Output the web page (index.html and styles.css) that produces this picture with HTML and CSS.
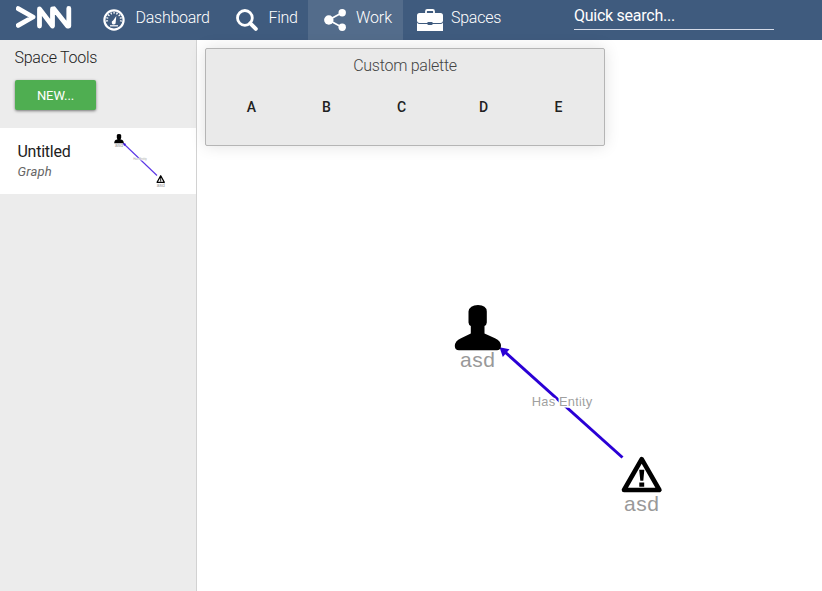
FILE: index.html
```html
<!DOCTYPE html>
<html lang="en">
<head>
<meta charset="utf-8">
<title>Work</title>
<link rel="stylesheet" href="styles.css">
</head>
<body>
<header class="topbar">
  <a class="logo" aria-label="Home">
    <svg width="56" height="24" viewBox="0 0 56 24"><path d="M2.200 2.600L17 11L2.200 19.400M23.500 20V2.900L36.500 20V2.900M38 2.900L51.500 20M52.800 2.500V20" fill="none" stroke="#fff" stroke-width="4.800" stroke-linejoin="round" stroke-linecap="round"/></svg>
  </a>
  <nav class="nav">
    <a class="nav-item dashboard">
      <svg width="22" height="22" viewBox="0 0 22 22"><circle cx="11" cy="11" r="9.6" fill="none" stroke="#fff" stroke-width="2.2"/><path d="M4.2 12.5A7 7 0 1 1 17.8 12.5" fill="none" stroke="#fff" stroke-width="2" stroke-dasharray="1.3 1.7"/><path d="M13.3 7L12.7 13.2A2 2 0 1 1 10.1 11.6Z" fill="#fff"/><path d="M7 16.8H15" stroke="#fff" stroke-width="1.2"/></svg>
      <span>Dashboard</span>
    </a>
    <a class="nav-item find">
      <svg width="22" height="22" viewBox="0 0 22 22"><circle cx="8.9" cy="8.9" r="7.4" fill="none" stroke="#fff" stroke-width="2.8"/><path d="M14.3 14.3L19.8 19.8" stroke="#fff" stroke-width="4" stroke-linecap="round"/></svg>
      <span>Find</span>
    </a>
    <a class="nav-item work active">
      <svg width="22" height="22" viewBox="0 0 22 22"><path d="M18 3.7L4.6 11L18 18.3" fill="none" stroke="#fff" stroke-width="1.7"/><circle cx="4.8" cy="11" r="4.7" fill="#fff"/><circle cx="18.2" cy="3.7" r="3.7" fill="#fff"/><circle cx="18.2" cy="18.3" r="3.7" fill="#fff"/></svg>
      <span>Work</span>
    </a>
    <a class="nav-item spaces">
      <svg width="26" height="22" viewBox="0 0 26 22"><path d="M9 4V2.3Q9 1 10.3 1H15.7Q17 1 17 2.3V4" fill="none" stroke="#fff" stroke-width="1.8"/><path d="M2.500 4H23.500Q26 4 26 6.500V12Q25.700 14 23.500 14H15.500V13H10.500V14H2.500Q.3 14 0 12V6.500Q0 4 2.500 4Z" fill="#fff"/><path d="M0 13.800Q1 15 2.700 15H10.300Q10.500 16 11.500 16H14.500Q15.500 16 15.700 15H23.300Q25 15 26 13.800V22H0Z" fill="#fff"/></svg>
      <span>Spaces</span>
    </a>
  </nav>
  <div class="search">Quick search...</div>
</header>
<div class="workspace">
  <aside class="sidebar">
    <h2 class="side-title">Space Tools</h2>
    <button class="new-button">NEW...</button>
    <section class="card">
      <div class="card-text">
        <div class="card-name">Untitled</div>
        <div class="card-type">Graph</div>
      </div>
      <svg class="thumb" width="56" height="56" viewBox="0 0 56 56">
        <path d="M12 11L45 42.500" stroke="#5a35e6" stroke-width="1.1"/>
        <path d="M10.5 9.5L14.2 11L12.2 13Z" fill="#3814d8"/>
        <path d="M4.800 2.2Q5 1 7 1T9.200 2.200V4.800L8.500 6.500Q11.800 6.700 11.800 10.200H2.200Q2.200 6.700 5.400 6.500L4.800 4.800Z" fill="#000"/>
        <text x="7" y="14" class="mini-name">asd</text>
        <text x="28" y="26.500" class="mini-edge">Has Entity</text>
        <path d="M48.700 42.800L52.300 49.300H45.100Z" fill="#fff" stroke="#000" stroke-width="1.300" stroke-linejoin="round"/>
        <path d="M48.700 45V48.600" stroke="#000" stroke-width=".9"/>
        <text x="48.700" y="53.700" class="mini-name">asd</text>
      </svg>
    </section>
  </aside>
  <main class="canvas">
    <svg class="graph" width="625" height="551" viewBox="197 40 625 551">
      <path d="M622.500 457.500L505 352" stroke="#2a00d5" stroke-width="3"/>
      <path d="M499.500 347.300L509.500 349.300L502.800 357Z" fill="#2a00d5"/>
      <path d="M468.500 311.500Q469.500 305 478 305T486.800 311.500V322.500Q486.500 325.500 484.500 326V333.500L495 338.200Q501 341 501 346Q500.500 350.300 497 350.300H459Q455 350.300 454.800 346Q454.800 341 461 338.200L470.800 333.500V326Q468.800 325.500 468.500 322.500Z" fill="#000"/>
      <text x="477.500" y="367" class="node-name" textLength="35">asd</text>
      <text x="562" y="406" class="edge-name" textLength="60.500">Has Entity</text>
      <path d="M641.700 459.200L659.400 490H624Z" fill="#fff" stroke="#000" stroke-width="4.600" stroke-linejoin="round"/>
      <path d="M639.200 469.800H644.300L643.300 480.800H640.300ZM639.300 482.600H644.200V486.700H639.300Z" fill="#000"/>
      <text x="641.500" y="511" class="node-name" textLength="35">asd</text>
    </svg>
    <section class="palette">
      <h3 class="palette-title">Custom palette</h3>
      <div class="palette-items"><span>A</span><span>B</span><span>C</span><span>D</span><span>E</span></div>
    </section>
  </main>
</div>
</body>
</html>
```
FILE: styles.css
```css
* { box-sizing: border-box; }

body {
  margin: 0;
  height: 591px;
  overflow: hidden;
  display: flex;
  flex-direction: column;
  background: #fff;
  font-family: Roboto, "Liberation Sans", sans-serif;
  font-size: 16px;
  letter-spacing: -0.26px;
  color: #212121;
}

.topbar {
  display: flex;
  height: 40px;
  flex: none;
  background: #3f5b7e;
  color: #fff;
}

.logo {
  width: 92px;
  padding: 6px 0 0 16px;
}

.nav { display: flex; }

.nav-item {
  display: flex;
  align-items: flex-start;
  padding-top: 9px;
  font-weight: 300;
  line-height: 18px;
}

.nav-item svg { flex: none; }
.nav-item span { margin-left: 10.5px; }

.dashboard { width: 132px; padding-left: 11px; }
.find { width: 84px; padding-left: 12px; }
.work { width: 95px; padding-left: 15.5px; letter-spacing: -0.1px; }
.spaces { width: 121px; padding-left: 14px; }
.spaces span { margin-left: 8px; }
.active { background: #536c8b; }

.search {
  margin-left: 50px;
  width: 200px;
  height: 30px;
  padding-top: 6px;
  line-height: 20px;
  border-bottom: 1px solid #d5dbe8;
}

.workspace {
  display: flex;
  flex: 1;
}

.sidebar {
  width: 197px;
  flex: none;
  background: #ececec;
  border-right: 1px solid #d2d2d2;
}

.side-title {
  margin: 8px 0 0 14.5px;
  font-size: 16px;
  font-weight: 300;
  line-height: 20px;
}

.new-button {
  display: block;
  width: 81px;
  height: 30px;
  margin: 12px 0 18px 15px;
  padding: 0;
  border: 0;
  border-radius: 2px;
  background: #4fae51;
  box-shadow: 0 1px 3px rgba(0, 0, 0, 0.5);
  color: #fff;
  font: 400 13px Roboto, sans-serif;
  letter-spacing: -0.1px;
}

.card {
  display: flex;
  height: 66px;
  background: #fff;
}

.card-text {
  width: 112px;
  padding: 14px 0 0 17.5px;
}

.card-name { line-height: 20px; }

.card-type {
  font-size: 13px;
  font-style: italic;
  line-height: 19px;
  letter-spacing: 0.2px;
  color: #666;
}

.thumb { margin-top: 5px; }

.mini-name {
  font: 5px "Liberation Sans", sans-serif;
  letter-spacing: 0;
  fill: #999;
  text-anchor: middle;
}

.mini-edge {
  font: 3px "Liberation Sans", sans-serif;
  letter-spacing: 0;
  fill: #aaa;
  stroke: #fff;
  stroke-width: 0.6px;
  paint-order: stroke;
  text-anchor: middle;
}

.canvas {
  display: grid;
  flex: 1;
}

.graph { grid-area: 1 / 1; }

.node-name {
  font: 21px "Liberation Sans", sans-serif;
  letter-spacing: 0;
  fill: #999;
  text-anchor: middle;
}

.edge-name {
  font: 13px "Liberation Sans", sans-serif;
  letter-spacing: 0;
  fill: #a0a0a0;
  stroke: #fff;
  stroke-width: 3px;
  paint-order: stroke;
  text-anchor: middle;
}

.palette {
  grid-area: 1 / 1;
  width: 400px;
  height: 98px;
  margin: 8px 0 0 8px;
  background: #eaeaea;
  border: 1px solid #b5b5b5;
  border-radius: 2px;
  box-shadow: 0 0 16px rgba(0, 0, 0, 0.12);
}

.palette-title {
  margin: 7px 0 0;
  text-align: center;
  font-size: 16px;
  font-weight: 300;
  line-height: 20px;
  color: #444;
}

.palette-items {
  display: grid;
  grid-template-columns: 75px 75px 75px 89px 61px;
  margin: 21px 0 0 8px;
  font-size: 14px;
  font-weight: 500;
  line-height: 20px;
  letter-spacing: 0;
  text-align: center;
}
```
